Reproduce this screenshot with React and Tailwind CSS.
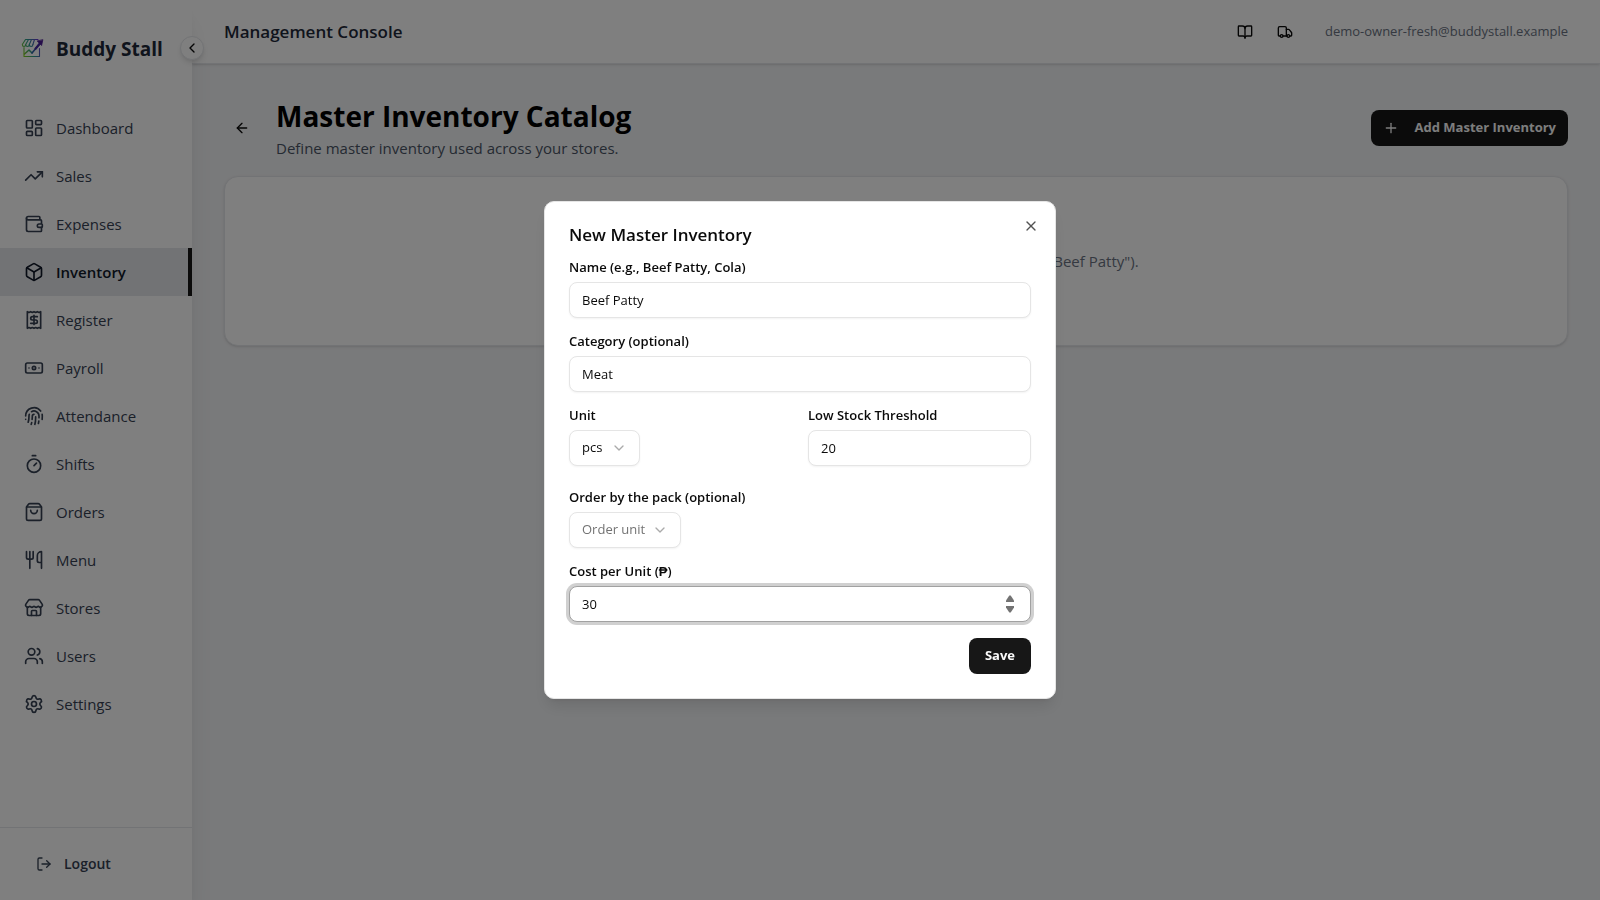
import React, { useState } from 'react';
import {
  ArrowLeft,
  Banknote,
  BookOpen,
  Box,
  ChevronDown,
  ChevronLeft,
  Fingerprint,
  LayoutDashboard,
  LogOut,
  Plus,
  Receipt,
  Settings,
  ShoppingBag,
  Store,
  Timer,
  TrendingUp,
  Truck,
  Users,
  Utensils,
  Wallet,
  X,
} from 'lucide-react';

const navItems = [
  { label: 'Dashboard', icon: LayoutDashboard },
  { label: 'Sales', icon: TrendingUp },
  { label: 'Expenses', icon: Wallet },
  { label: 'Inventory', icon: Box, active: true },
  { label: 'Register', icon: Receipt },
  { label: 'Payroll', icon: Banknote },
  { label: 'Attendance', icon: Fingerprint },
  { label: 'Shifts', icon: Timer },
  { label: 'Orders', icon: ShoppingBag },
  { label: 'Menu', icon: Utensils },
  { label: 'Stores', icon: Store },
  { label: 'Users', icon: Users },
  { label: 'Settings', icon: Settings },
];

const inputClass =
  'h-9 w-full rounded-[8px] border border-neutral-200 bg-white px-3 text-[13px] text-neutral-950 shadow-xs outline-none';

const Logo = () => (
  <svg viewBox="0 0 24 24" className="h-6 w-6 shrink-0" fill="none" strokeLinecap="round" strokeLinejoin="round" aria-hidden="true">
    <defs>
      <linearGradient id="stall" x1="2" y1="16" x2="21" y2="8" gradientUnits="userSpaceOnUse">
        <stop offset="0" stopColor="#84cc16" />
        <stop offset="0.45" stopColor="#2a9d8f" />
        <stop offset="1" stopColor="#6d28d9" />
      </linearGradient>
    </defs>
    <g stroke="url(#stall)" strokeWidth="1.1">
      <path d="M18 3.500H5.500L2.300 8.500c0 2.600 3.400 2.600 3.400 0 0 2.600 3.600 2.600 3.600 0 0 2.600 3.600 2.600 3.600 0" />
      <path d="M8.500 3.500 5.700 8.500M11.500 3.500 9.300 8.500M14.500 3.500l-1.600 5" />
      <path d="M4 11.500v9h15.500V12.500" />
      <path d="m4.500 18 4.500-4 3 3" strokeWidth="1.5" />
    </g>
    <path d="M12 17 20 7.500" stroke="#2f5fa8" strokeWidth="1.6" />
    <path d="m15.500 12.700 5-6" stroke="#4527a0" strokeWidth="2.2" />
    <path d="m22.800 4-1.200 5.500-4.200-4.300z" fill="#4c1d95" stroke="#4c1d95" strokeWidth="0.8" />
  </svg>
);

const Sidebar = () => (
  <aside className="relative z-10 flex w-48 shrink-0 flex-col bg-white shadow-xl">
    <div className="flex h-24 items-center gap-3 pl-5">
      <Logo />
      <span className="pt-0.5 text-[19px] font-bold whitespace-nowrap text-gray-800">Buddy Stall</span>
    </div>
    <button
      type="button"
      aria-label="Collapse sidebar"
      className="absolute top-9 -right-3 flex h-6 w-6 items-center justify-center rounded-full border border-gray-200 bg-white text-neutral-950 shadow-md"
    >
      <ChevronLeft className="h-4 w-4" />
    </button>
    <nav className="flex flex-1 flex-col pt-2">
      {navItems.map(({ label, icon: Icon, active }) => (
        <a
          key={label}
          href="#"
          className={
            active
              ? 'flex h-12 items-center gap-3 border-r-4 border-neutral-900 bg-gray-200 px-6 text-[15px] font-semibold text-gray-900'
              : 'flex h-12 items-center gap-3 px-6 text-[15px] text-gray-700'
          }
        >
          <Icon className="h-5 w-5" />
          {label}
        </a>
      ))}
    </nav>
    <div className="flex h-[73px] items-center border-t border-gray-200 px-6">
      <button type="button" className="flex h-9 items-center gap-3 px-3 text-sm font-semibold text-gray-700">
        <LogOut className="h-4 w-4" />
        Logout
      </button>
    </div>
  </aside>
);

const TopBar = () => (
  <header className="flex h-16 shrink-0 items-center justify-between border-b border-gray-200 bg-white px-8 shadow-sm">
    <h2 className="text-[17px] font-semibold text-gray-800">Management Console</h2>
    <div className="flex items-center gap-2">
      <button type="button" aria-label="Guide" className="flex h-8 w-8 items-center justify-center">
        <BookOpen className="h-4 w-4" />
      </button>
      <button type="button" aria-label="Deliveries" className="flex h-8 w-8 items-center justify-center">
        <Truck className="h-4 w-4" />
      </button>
      <span className="pl-4 text-[13px] text-gray-500">demo-owner-fresh@buddystall.example</span>
    </div>
  </header>
);

const Field = ({ id, label, children }) => (
  <div className="flex flex-col items-start gap-2">
    <label htmlFor={id} className="text-[13px] leading-[14px] font-semibold">
      {label}
    </label>
    {children}
  </div>
);

const InventoryDialog = () => {
  const [cost, setCost] = useState(30);

  return (
    <div className="fixed inset-0 z-50 flex items-center justify-center bg-black/50">
      <div
        role="dialog"
        aria-modal="true"
        aria-labelledby="dialog-title"
        className="relative w-full max-w-lg rounded-[10px] border border-neutral-200 bg-white p-6 text-neutral-950 shadow-lg"
      >
        <button type="button" aria-label="Close" className="absolute top-4 right-4 opacity-70">
          <X className="h-4 w-4" />
        </button>
        <form className="flex flex-col gap-4" onSubmit={(e) => e.preventDefault()}>
          <h3 id="dialog-title" className="text-[17px] leading-[18px] font-semibold">
            New Master Inventory
          </h3>
          <Field id="name" label="Name (e.g., Beef Patty, Cola)">
            <input id="name" defaultValue="Beef Patty" className={inputClass} />
          </Field>
          <Field id="category" label="Category (optional)">
            <input id="category" defaultValue="Meat" className={inputClass} />
          </Field>
          <div className="grid grid-cols-2 gap-4 pb-2">
            <Field id="unit" label="Unit">
              <div className="relative">
                <select
                  id="unit"
                  className="h-9 w-[71px] appearance-none rounded-[8px] border border-neutral-200 bg-white pr-8 pl-3 text-[13px] shadow-xs outline-none"
                >
                  <option>pcs</option>
                  <option>kg</option>
                </select>
                <ChevronDown className="pointer-events-none absolute top-2.5 right-[13px] h-4 w-4 text-neutral-500 opacity-60" />
              </div>
            </Field>
            <Field id="threshold" label="Low Stock Threshold">
              <input id="threshold" defaultValue="20" className={inputClass} />
            </Field>
          </div>
          <Field id="order-unit" label="Order by the pack (optional)">
            <div className="relative">
              <select
                id="order-unit"
                className="h-9 w-28 appearance-none rounded-[8px] border border-neutral-200 bg-white pr-8 pl-3 text-[13px] text-neutral-500 shadow-xs outline-none"
              >
                <option>Order unit</option>
                <option>box</option>
              </select>
              <ChevronDown className="pointer-events-none absolute top-2.5 right-[13px] h-4 w-4 text-neutral-500 opacity-60" />
            </div>
          </Field>
          <Field id="cost" label="Cost per Unit (₱)">
            <div className="relative w-full">
              <input
                id="cost"
                type="number"
                value={cost}
                onChange={(e) => setCost(e.target.value)}
                className="h-9 w-full [appearance:textfield] rounded-[8px] border border-neutral-400 bg-white px-3 text-[13px] ring-[3px] ring-neutral-400/50 outline-none"
              />
              <div className="absolute inset-y-0 right-[13px] flex w-4 flex-col items-center justify-center gap-1 text-neutral-500">
                <button type="button" aria-label="Increase cost" onClick={() => setCost(Number(cost) + 1)}>
                  <svg viewBox="0 0 8 7" className="block h-[7px] w-2" fill="currentColor">
                    <path d="M3.300.500h1.400L8 5.500V7H0V5.500z" />
                  </svg>
                </button>
                <button type="button" aria-label="Decrease cost" onClick={() => setCost(Number(cost) - 1)}>
                  <svg viewBox="0 0 8 7" className="block h-[7px] w-2" fill="currentColor">
                    <path d="M3.300 6.500h1.400L8 1.500V0H0v1.500z" />
                  </svg>
                </button>
              </div>
            </div>
          </Field>
          <button
            type="submit"
            className="h-9 self-end rounded-[8px] bg-neutral-900 px-4 text-[13px] font-bold text-neutral-50"
          >
            Save
          </button>
        </form>
      </div>
    </div>
  );
};

const App = () => (
  <div className="flex min-h-screen bg-gray-100 font-['Open_Sans',sans-serif] text-neutral-950">
    <Sidebar />
    <div className="flex min-w-0 flex-1 flex-col">
      <TopBar />
      <main className="flex-1 p-8">
        <div className="flex items-center gap-4">
          <button type="button" aria-label="Back" className="flex h-9 w-9 items-center justify-center">
            <ArrowLeft className="h-4 w-4" />
          </button>
          <div className="flex-1">
            <h1 className="text-[28px] leading-10 font-bold text-black">Master Inventory Catalog</h1>
            <p className="text-[15px] leading-6 text-gray-600">Define master inventory used across your stores.</p>
          </div>
          <button
            type="button"
            className="flex h-9 items-center gap-4 rounded-[8px] bg-neutral-900 px-3 text-[13px] font-bold text-neutral-50"
          >
            <Plus className="h-4 w-4" />
            Add Master Inventory
          </button>
        </div>
        <section className="mt-4 flex h-[170px] items-center justify-center rounded-[14px] border border-gray-200 bg-white shadow-sm">
          <p className="text-[15px] text-gray-500">
            No master inventories yet. Add your first inventory (e.g., "Beef Patty").
          </p>
        </section>
      </main>
    </div>
    <InventoryDialog />
  </div>
);

export default App;
